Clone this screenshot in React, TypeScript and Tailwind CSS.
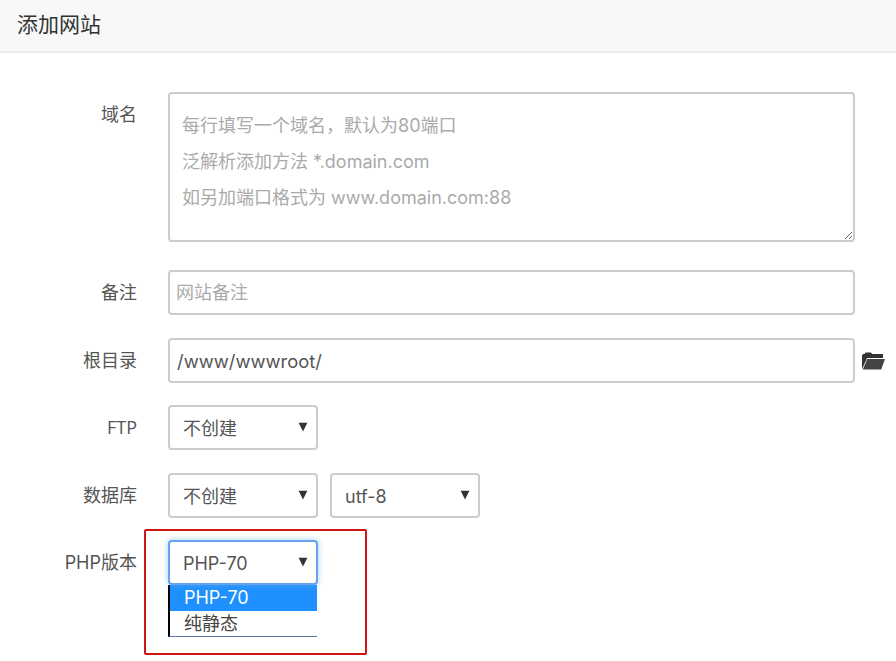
import React from 'react';

const fontStack = "font-['Inter','Noto_Sans_CJK_SC',sans-serif]";
const labelClass = 'w-[137px] shrink-0 text-right text-[18px] text-[#555]';
const fieldClass = 'rounded-[4px] border-2 bg-white text-[18px] text-[#555] outline-none';

function Arrow() {
    return (
        <svg className="absolute left-[130px] top-[17px]" width="10" height="10" viewBox="0 0 10 10">
            <path d="M0.6 0.8H9.4L5 9.6Z" fill="#333" />
        </svg>
    );
}

function SelectBox({ value, focused }: { value: string; focused?: boolean }) {
    return (
        <div className="relative w-[150px]">
            <select
                defaultValue={value}
                className={`block h-[45px] w-[150px] appearance-none pl-[13px] pt-[1px] ${fieldClass} ${focused ? 'border-[#66a3ee] shadow-[0_0_6px_rgba(102,175,233,0.6)]' : 'border-[#ccc]'}`}
            >
                <option value={value}>{value}</option>
            </select>
            <Arrow />
        </div>
    );
}

export default function App() {
    return (
        <div className={`h-[661px] w-[896px] overflow-hidden bg-white ${fontStack}`}>
            <div className="flex h-[53px] items-center border-b-2 border-[#eee] bg-[#f8f8f8] pb-[2px] pl-[17px] text-[21px] text-[#333]">
                添加网站
            </div>

            <form className="pt-[39px]">
                <div className="flex">
                    <label className={`${labelClass} pt-[9px] leading-[28px]`}>域名</label>
                    <textarea
                        className={`ml-[31px] block h-[150px] w-[687px] resize-y border-[#ccc] px-[12px] pt-[14px] leading-[36px] placeholder:text-[#aaa] ${fieldClass}`}
                        placeholder={'每行填写一个域名，默认为80端口\n泛解析添加方法 *.domain.com\n如另加端口格式为 www.domain.com:88'}
                    />
                </div>

                <div className="mt-[28px] flex items-center">
                    <label className={labelClass}>备注</label>
                    <input
                        className={`ml-[31px] h-[45px] w-[687px] border-[#ccc] px-[6px] placeholder:text-[#aaa] ${fieldClass}`}
                        placeholder="网站备注"
                    />
                </div>

                <div className="mt-[23px] flex items-center">
                    <label className={labelClass}>根目录</label>
                    <input
                        className={`ml-[31px] h-[45px] w-[687px] border-[#ccc] px-[7px] !text-[18.4px] ${fieldClass}`}
                        defaultValue="/www/wwwroot/"
                    />
                    <svg className="ml-[7px]" width="23" height="18" viewBox="0 0 23 18">
                        <path d="M0 17V3.5L1 2H2.5L3.5 0.5H9L10 2H21V6H5L1 15Z" fill="#333" />
                        <path d="M5.2 7H23L19.2 17.5H0.8Z" fill="#444" />
                    </svg>
                </div>

                <div className="mt-[22px] flex items-center">
                    <label className={`${labelClass} font-['Open_Sans','Noto_Sans_CJK_SC',sans-serif]`}>FTP</label>
                    <div className="ml-[31px]">
                        <SelectBox value="不创建" />
                    </div>
                </div>

                <div className="mt-[23px] flex items-center">
                    <label className={labelClass}>数据库</label>
                    <div className="ml-[31px] flex gap-[12px]">
                        <SelectBox value="不创建" />
                        <SelectBox value="utf-8" />
                    </div>
                </div>

                <div className="relative mt-[22px] flex items-start">
                    <label className={`${labelClass} pt-[7px] leading-[32px]`}>PHP版本</label>
                    <div className="ml-[31px]">
                        <SelectBox value="PHP-70" focused />
                        <div className="w-[149px] border-b border-l-2 border-b-[#5a7ba8] border-l-black bg-white text-[18px] leading-[25px]">
                            <div className="h-[26px] bg-[#1e90ff] pl-[14px] text-white">PHP-70</div>
                            <div className="h-[25px] pl-[14px] text-[#444]">纯静态</div>
                        </div>
                    </div>
                    <div className="pointer-events-none absolute left-[144px] top-[-11px] h-[126px] w-[223px] rounded-[2px] border-2 border-[#d01515]" />
                </div>
            </form>
        </div>
    );
}
